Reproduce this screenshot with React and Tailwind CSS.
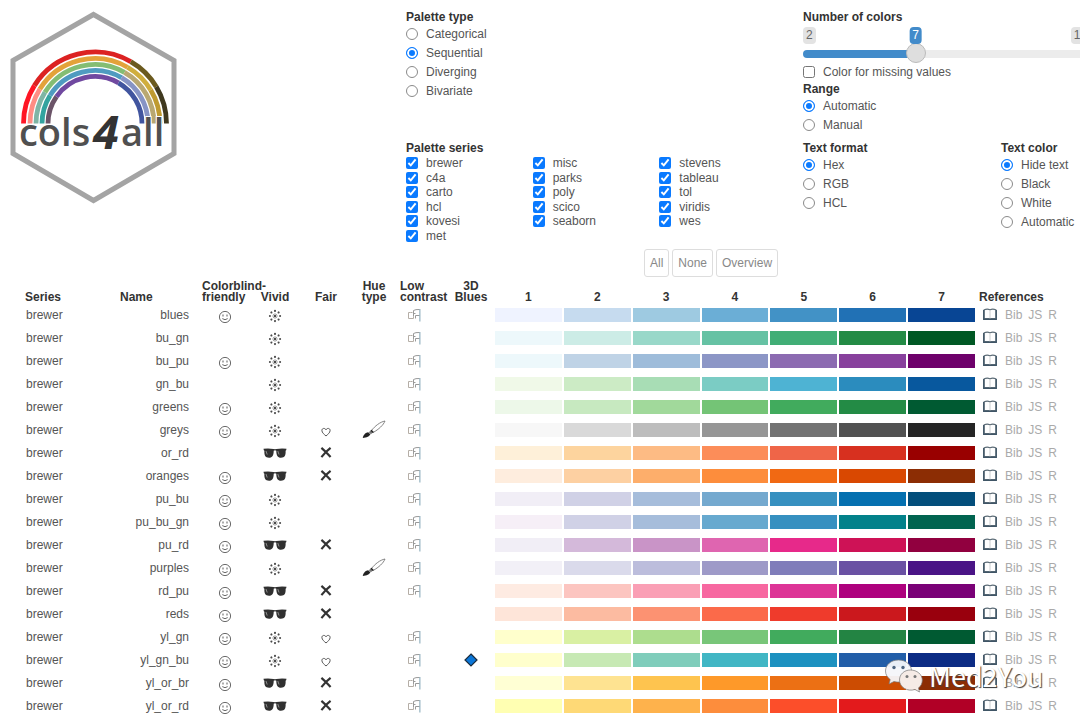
import React, { useState } from "react";

const PALETTES = [
  { name: "blues", cb: true, colors: ["#eff3ff", "#c6dbef", "#9ecae1", "#6baed6", "#4292c6", "#2171b5", "#084594"] },
  { name: "bu_gn", colors: ["#edf8fb", "#ccece6", "#99d8c9", "#66c2a4", "#41ae76", "#238b45", "#005824"] },
  { name: "bu_pu", cb: true, colors: ["#edf8fb", "#bfd3e6", "#9ebcda", "#8c96c6", "#8c6bb1", "#88419d", "#6e016b"] },
  { name: "gn_bu", colors: ["#f0f9e8", "#ccebc5", "#a8ddb5", "#7bccc4", "#4eb3d3", "#2b8cbe", "#08589e"] },
  { name: "greens", cb: true, colors: ["#edf8e9", "#c7e9c0", "#a1d99b", "#74c476", "#41ab5d", "#238b45", "#005a32"] },
  { name: "greys", cb: true, fair: "heart", hue: true, colors: ["#f7f7f7", "#d9d9d9", "#bdbdbd", "#969696", "#737373", "#525252", "#252525"] },
  { name: "or_rd", vivid: true, fair: "cross", colors: ["#fef0d9", "#fdd49e", "#fdbb84", "#fc8d59", "#ef6548", "#d7301f", "#990000"] },
  { name: "oranges", cb: true, vivid: true, fair: "cross", colors: ["#feedde", "#fdd0a2", "#fdae6b", "#fd8d3c", "#f16913", "#d94801", "#8c2d04"] },
  { name: "pu_bu", cb: true, colors: ["#f1eef6", "#d0d1e6", "#a6bddb", "#74a9cf", "#3690c0", "#0570b0", "#034e7b"] },
  { name: "pu_bu_gn", cb: true, colors: ["#f6eff7", "#d0d1e6", "#a6bddb", "#67a9cf", "#3690c0", "#02818a", "#016450"] },
  { name: "pu_rd", cb: true, vivid: true, fair: "cross", colors: ["#f1eef6", "#d4b9da", "#c994c7", "#df65b0", "#e7298a", "#ce1256", "#91003f"] },
  { name: "purples", cb: true, hue: true, colors: ["#f2f0f7", "#dadaeb", "#bcbddc", "#9e9ac8", "#807dba", "#6a51a3", "#4a1486"] },
  { name: "rd_pu", cb: true, vivid: true, fair: "cross", colors: ["#feebe2", "#fcc5c0", "#fa9fb5", "#f768a1", "#dd3497", "#ae017e", "#7a0177"] },
  { name: "reds", cb: true, vivid: true, fair: "cross", noContrast: true, colors: ["#fee5d9", "#fcbba1", "#fc9272", "#fb6a4a", "#ef3b2c", "#cb181d", "#99000d"] },
  { name: "yl_gn", cb: true, fair: "heart", colors: ["#ffffcc", "#d9f0a3", "#addd8e", "#78c679", "#41ab5d", "#238443", "#005a32"] },
  { name: "yl_gn_bu", cb: true, fair: "heart", blues: true, colors: ["#ffffcc", "#c7e9b4", "#7fcdbb", "#41b6c4", "#1d91c0", "#225ea8", "#0c2c84"] },
  { name: "yl_or_br", cb: true, vivid: true, fair: "cross", colors: ["#ffffd4", "#fee391", "#fec44f", "#fe9929", "#ec7014", "#cc4c02", "#8c2d04"] },
  { name: "yl_or_rd", cb: true, vivid: true, fair: "cross", colors: ["#ffffb2", "#fed976", "#feb24c", "#fd8d3c", "#fc4e2a", "#e31a1c", "#b10026"] },
];

const SERIES = [
  ["brewer", "c4a", "carto", "hcl", "kovesi", "met"],
  ["misc", "parks", "poly", "scico", "seaborn"],
  ["stevens", "tableau", "tol", "viridis", "wes"],
];

// Each ring lists [start angle, end angle, colour], in degrees anticlockwise from the right.
const RINGS = [
  { r: 71.5, parts: [[180, 148, "#ff1524"], [148, 60, "#dc2222"], [60, 31, "#6b5a1e"], [31, 0, "#40391f"]] },
  { r: 65, parts: [[180, 148, "#ff8d84"], [148, 60, "#e3a23a"], [60, 31, "#d0ae3d"], [31, 0, "#bf9a30"]] },
  { r: 59, parts: [[180, 148, "#7fb5a5"], [148, 60, "#84bd73"], [60, 0, "#b9a872"]] },
  { r: 53, parts: [[180, 148, "#33a39f"], [148, 60, "#4f9bc0"], [60, 0, "#8794c5"]] },
  { r: 47, parts: [[180, 145, "#6b5468"], [145, 60, "#7049a0"], [60, 0, "#41559f"]] },
];

function arc(r, a, b) {
  const pt = (deg) => {
    const t = (deg * Math.PI) / 180;
    return `${(95 + r * Math.cos(t)).toFixed(2)} ${(123.5 - r * Math.sin(t)).toFixed(2)}`;
  };
  return `M${pt(a)}A${r} ${r} 0 0 1 ${pt(b)}`;
}

function Logo() {
  return (
    <svg width="170" height="196" viewBox="8 10 170 196" role="img" aria-label="cols4all">
      <path d="M93.500 14.500 174 60.500V153.500L93.500 200.500 13 153.500V60.500Z" fill="#fff" stroke="#a4a4a4" strokeWidth="5" />
      {RINGS.map((ring) =>
        ring.parts.map(([a, b, c]) => (
          <path key={c} d={arc(ring.r, a, b)} fill="none" stroke={c} strokeWidth="4.800" />
        ))
      )}
      <g fill="#505050" stroke="#fff" strokeWidth="2" paintOrder="stroke" fontFamily="'Open Sans', 'Noto Sans', sans-serif" fontSize="38" fontWeight="600">
        <text x="19" y="146">cols</text>
        <text x="121" y="146">all</text>
        <text x="93" y="149" fontSize="47" fontWeight="700" fontStyle="italic" fill="#333">4</text>
      </g>
    </svg>
  );
}

const Smile = () => (
  <svg width="14" height="14" viewBox="0 0 14 14" className="mx-auto mt-1 block" fill="none" stroke="#6a6a6a">
    <circle cx="7" cy="7" r="5.600" strokeWidth="1" />
    <path d="M4.300 8.600Q7 10.800 9.700 8.600" strokeWidth="1" />
    <path d="M5 4.500v2M9 4.500v2" strokeWidth="1.100" />
  </svg>
);

const Flower = () => (
  <svg width="14" height="14" viewBox="0 0 14 14" className="mx-auto mt-0.5 block" fill="#4a4a4a" stroke="#777">
    {[0, 45, 90, 135, 180, 225, 270, 315].map((d) => (
      <g key={d} transform={`rotate(${d} 7 7)`}>
        <circle cx="7" cy="1.900" r="1.050" stroke="none" />
        <path d="M7 4V7" strokeWidth="0.600" />
      </g>
    ))}
    <circle cx="7" cy="7" r="1.200" stroke="none" />
  </svg>
);

const Glasses = () => (
  <svg width="24" height="10" viewBox="0 0 24 10" className="mx-auto block">
    <path d="M.5 .8Q5 .1 10.500 .9L12 1.300 13.500 .9Q19 .1 23.500 .8L23.200 2.300 22.600 2.800C22.900 7.500 21.700 9.700 18 9.700 14.600 9.700 13.300 7.500 13.300 2.700Q12 1.900 10.700 2.700C10.700 7.500 9.400 9.700 6 9.700 2.300 9.700 1.100 7.500 1.400 2.800L.8 2.300Z" fill="#303030" />
    <path d="M3 3 4.200 6.500M14.800 3 16 6.500" stroke="#8c8c8c" strokeWidth="1" />
  </svg>
);

const Cross = () => (
  <svg width="12" height="11" viewBox="-0.5 0 11 10" className="mx-auto block">
    <path d="M.8.8Q4 3.500 9.200 9.200M9.200.8Q5 4 .8 9.200" stroke="#333" strokeWidth="2" fill="none" />
  </svg>
);

const Heart = () => (
  <svg width="10" height="10" viewBox="0 0 10 10" className="mx-auto mt-1 block">
    <path d="M5 9C3.300 7.400.9 5.800.9 3.500.9 1 3.900.7 5 2.800 6.100.7 9.100 1 9.100 3.500 9.100 5.800 6.700 7.400 5 9Z" fill="none" stroke="#555" strokeWidth="1" />
  </svg>
);

const Brush = () => (
  <svg width="24" height="19" viewBox="0 0 24 19" className="mx-auto block">
    <path d="M9.500 10.500C13 6 18 2 23 1 21.500 5 16.500 9.500 11.300 12.400Z" fill="#fff" stroke="#777" strokeWidth="0.900" />
    <path d="M6.800 12.200 9.500 9.800 11.800 12 8.800 14.200Z" fill="#777" />
    <path d="M9 10.300 11.300 12.500" stroke="#222" strokeWidth="1.200" />
    <path d="M.8 18C1 15.800 3 12.600 6.200 12.300L8.300 14.300C7.800 16.300 4.500 17.600.8 18Z" fill="#222" />
  </svg>
);

const Contrast = () => (
  <svg width="14" height="14" viewBox="0 0 14 14" className="ml-[11px] block" fill="none" strokeWidth="1">
    <path d="M3.500 4.500H1.500V10.500H6.500V8.500M3.500 4.500H5.500" stroke="#b5aea6" />
    <path d="M6.500 8.500V2.500Q8.500 1.300 12.500 1.500M8.500 10.500V7.500H12.500M6.500 5.500H8.500" stroke="#9a9a9a" />
    <path d="M12.900 1V13.500" stroke="#7fa3b4" />
  </svg>
);

const Diamond = () => (
  <svg width="14" height="14" viewBox="0 0 14 14" className="mx-auto block">
    <path d="M7 1 13 7 7 13 1 7Z" fill="#0b76d8" stroke="#1b2b3c" strokeWidth="1.200" />
  </svg>
);

const Book = () => (
  <svg width="14" height="13" viewBox="0 0 14 13" className="block">
    <path d="M1.200 1.700Q4.300.6 7 1.700 9.700.6 12.800 1.700V10.500H1.200Z" fill="#fff" stroke="#5d6d78" strokeWidth="1.100" />
    <path d="M.7 2V11.400H13.300V2" fill="none" stroke="#3f5566" strokeWidth="1.300" />
    <path d="M7 2V10.500" stroke="#c4c8cb" strokeWidth="0.900" />
  </svg>
);

function Radio({ name, label, checked }) {
  return (
    <label className="flex h-[19px] items-center gap-2">
      <input
        type="radio"
        name={name}
        defaultChecked={checked}
        className="size-3 shrink-0 appearance-none rounded-full border border-[#8a8a8a] bg-white checked:border-[#0a7aff] checked:bg-[#0a7aff] checked:shadow-[inset_0_0_0_2px_#fff]"
      />
      {label}
    </label>
  );
}

function RadioGroup({ title, name, options, selected }) {
  return (
    <fieldset>
      <legend className="h-3.5 font-bold leading-3.5 text-[#333]">{title}</legend>
      {options.map((o) => (
        <Radio key={o} name={name} label={o} checked={o === selected} />
      ))}
    </fieldset>
  );
}

function SeriesBox({ label }) {
  return (
    <label className="flex items-center gap-2 leading-3.5">
      <input type="checkbox" defaultChecked className="size-3 shrink-0 accent-[#0a7aff]" />
      {label}
    </label>
  );
}

function ColorCount() {
  const [n, setN] = useState(7);
  const pct = (n - 2) / 13;
  return (
    <div>
      <label htmlFor="ncolors" className="block h-3.5 font-bold leading-3.5 text-[#333]">Number of colors</label>
      <div className="relative mt-[3px] flex h-[17px] justify-between leading-[17px]">
        <span className="rounded-sm bg-[#e3e3e3] px-[3px] text-[#666]">2</span>
        <span className="rounded-sm bg-[#e3e3e3] px-[3px] text-[#666]">15</span>
        <output
          htmlFor="ncolors"
          className="absolute top-0 -translate-x-1/2 rounded-sm bg-[#428bca] px-[3px] text-white"
          style={{ left: `calc(10px + (100% - 20px) * ${pct})` }}
        >
          {n}
        </output>
      </div>
      <input
        id="ncolors"
        type="range"
        min="2"
        max="15"
        value={n}
        onChange={(e) => setN(Number(e.target.value))}
        style={{ "--fill": `${(3 + pct * 94).toFixed(1)}%` }}
        className="block h-5 w-full appearance-none bg-transparent [&::-webkit-slider-runnable-track]:h-2 [&::-webkit-slider-runnable-track]:rounded-full [&::-webkit-slider-runnable-track]:bg-[linear-gradient(to_right,#428bca_var(--fill),#ececec_var(--fill))] [&::-webkit-slider-thumb]:-mt-[7px] [&::-webkit-slider-thumb]:size-5 [&::-webkit-slider-thumb]:appearance-none [&::-webkit-slider-thumb]:rounded-full [&::-webkit-slider-thumb]:border [&::-webkit-slider-thumb]:border-[#bbb] [&::-webkit-slider-thumb]:bg-[#dedede]"
      />
    </div>
  );
}

function Row({ p }) {
  return (
    <tr className="h-[23px]">
      <td className="pl-[26px]">brewer</td>
      <td className="pr-[11px] text-right">{p.name}</td>
      <td>{p.cb && <Smile />}</td>
      <td>{p.vivid ? <Glasses /> : <Flower />}</td>
      <td>{p.fair === "heart" ? <Heart /> : p.fair === "cross" ? <Cross /> : null}</td>
      <td>{p.hue && <Brush />}</td>
      <td>{!p.noContrast && <Contrast />}</td>
      <td>{p.blues && <Diamond />}</td>
      {p.colors.map((c) => (
        <td key={c} className="px-px">
          <div className="h-3.5" style={{ backgroundColor: c }} />
        </td>
      ))}
      <td className="pl-[7px]">
        <div className="flex items-center text-[#aaa]">
          <a href="#book" aria-label="Documentation"><Book /></a>
          <a href="#bib" className="ml-2">Bib</a>
          <a href="#js" className="ml-1.5">JS</a>
          <a href="#r" className="ml-1.5">R</a>
        </div>
      </td>
    </tr>
  );
}

function Watermark() {
  return (
    <div className="pointer-events-none absolute left-[884px] top-[656px] flex items-center gap-1.5">
      <svg width="39" height="36" viewBox="0 0 39 36">
        <path d="M14.500 2C7 2 1.500 6.800 1.500 13 1.500 16.500 3.400 19.500 6.200 21.500L5 26 10 23.500C19 26 27.500 20.500 27.500 13 27.500 6.800 22 2 14.500 2Z" fill="#f4f6fa" fillOpacity="0.950" stroke="#777" strokeWidth="0.700" />
        <path d="M26.500 12C20 12 15.500 16.500 15.500 22 15.500 29 23 34 31 31.500L35.500 34 34.500 30C37 28 38.300 25.200 38.300 22 38.300 16.500 33 12 26.500 12Z" fill="#f6ebe6" stroke="#777" strokeWidth="0.700" />
        <g fill="#4d6480">
          <circle cx="10" cy="9.500" r="1.700" />
          <circle cx="19" cy="9.500" r="1.700" />
          <circle cx="23" cy="18.500" r="1.500" fill="#777" />
          <circle cx="31" cy="18.500" r="1.500" fill="#777" />
        </g>
      </svg>
      <span className="font-['Noto_Sans_CJK_SC',sans-serif] text-[27px] leading-10 text-white [text-shadow:1px_1px_1px_#444]">Med2You</span>
    </div>
  );
}

export default function App() {
  return (
    <div className="relative h-screen overflow-hidden bg-white font-['Liberation_Sans',Arial,sans-serif] text-xs text-[#555]">
      <header className="grid grid-cols-[398px_397px_minmax(287px,1fr)] pl-2 pt-2.5">
        <Logo />
        <div>
          <div className="h-[131px]">
            <RadioGroup title="Palette type" name="type" options={["Categorical", "Sequential", "Diverging", "Bivariate"]} selected="Sequential" />
          </div>
          <fieldset>
            <legend className="h-3.5 font-bold leading-3.5 text-[#333]">Palette series</legend>
            <div className="mt-px grid h-[87px] w-[380px] grid-cols-3">
              {SERIES.map((col) => (
                <div key={col[0]} className="grid grid-rows-6">
                  {col.map((s) => (
                    <SeriesBox key={s} label={s} />
                  ))}
                </div>
              ))}
            </div>
          </fieldset>
        </div>
        <div>
          <ColorCount />
          <label className="flex h-[15px] items-center gap-2">
            <input type="checkbox" className="size-3 shrink-0" />
            Color for missing values
          </label>
          <div className="mt-[3px] h-[59px]">
            <RadioGroup title="Range" name="range" options={["Automatic", "Manual"]} selected="Automatic" />
          </div>
          <div className="grid grid-cols-[198px_1fr]">
            <RadioGroup title="Text format" name="format" options={["Hex", "RGB", "HCL"]} selected="Hex" />
            <RadioGroup title="Text color" name="color" options={["Hide text", "Black", "White", "Automatic"]} selected="Hide text" />
          </div>
        </div>
      </header>

      <div className="mt-1.5 flex gap-[3px] pl-[644px]">
        {["All", "None", "Overview"].map((b) => (
          <button key={b} type="button" className="h-7 rounded-[3px] border border-[#ddd] bg-white px-[5px] text-[#888]">
            {b}
          </button>
        ))}
      </div>

      <table className="mt-[3px] w-full table-fixed border-collapse whitespace-nowrap">
        <colgroup>
          <col className="w-[100px]" />
          <col className="w-[100px]" />
          <col className="w-[50px]" />
          <col className="w-[50px]" />
          <col className="w-[52px]" />
          <col className="w-[44px]" />
          <col className="w-[52px]" />
          <col className="w-[46px]" />
          <col span={7} />
          <col className="w-[104px]" />
        </colgroup>
        <thead className="text-[#333]">
          <tr className="h-[23px] align-bottom leading-[11px]">
            <th className="pl-[25px] text-left">Series</th>
            <th className="pl-5 text-left">Name</th>
            <th className="pl-0.5 text-left">Colorblind-<br />friendly</th>
            <th>Vivid</th>
            <th>Fair</th>
            <th>Hue<br />type</th>
            <th className="pl-1 text-left">Low<br />contrast</th>
            <th>3D<br />Blues</th>
            {[1, 2, 3, 4, 5, 6, 7].map((n) => (
              <th key={n}>{n}</th>
            ))}
            <th className="pl-[3px] text-left">References</th>
          </tr>
        </thead>
        <tbody>
          {PALETTES.map((p) => (
            <Row key={p.name} p={p} />
          ))}
        </tbody>
      </table>
      <Watermark />
    </div>
  );
}
